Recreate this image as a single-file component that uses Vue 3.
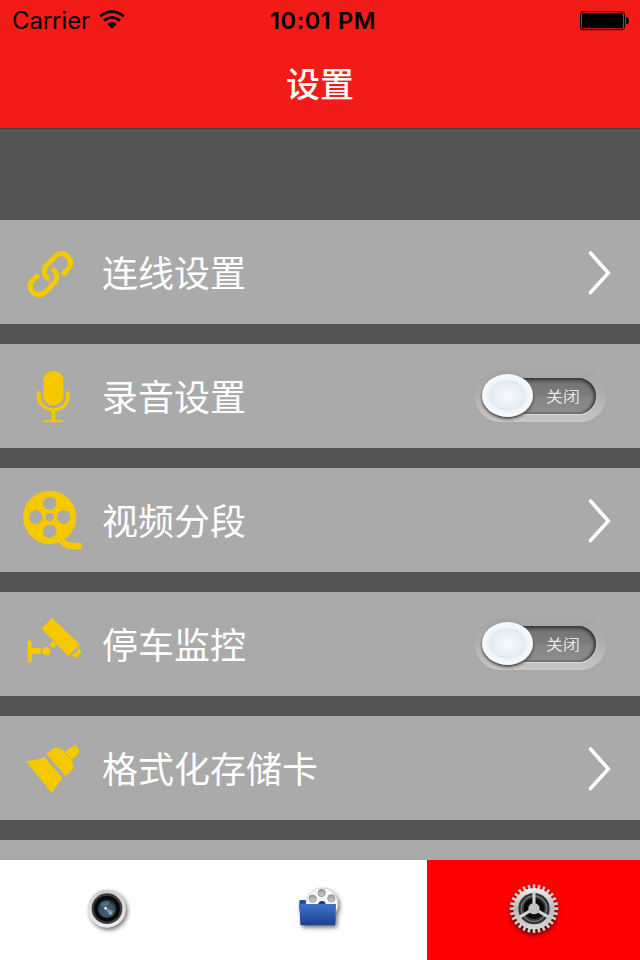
<script setup>
import { ref } from 'vue'

const rows = ref([
  { id: 'link', label: '连线设置', type: 'link' },
  { id: 'mic', label: '录音设置', type: 'switch' },
  { id: 'film', label: '视频分段', type: 'link' },
  { id: 'camera', label: '停车监控', type: 'switch' },
  { id: 'brush', label: '格式化存储卡', type: 'link' }
])

const teeth = Array.from({ length: 28 }, (_, i) => (i * 360) / 28)
</script>

<template>
  <div class="screen">
    <header class="header">
      <div class="status">
        <div class="carrier">
          <span>Carrier</span>
          <svg class="wifi" width="26" height="20" viewBox="0 0 26 20">
            <g fill="none" stroke="#000" stroke-width="2.7">
              <path d="M1.3 6.3 Q13 -3.1 24.7 6.3" />
              <path d="M5 10.6 Q13 4.1 21 10.6" />
            </g>
            <path d="M8.3 14 Q13 10.2 17.7 14 L13 18.8 Z" />
          </svg>
        </div>
        <span class="time">10:01 PM</span>
        <svg class="battery" width="50" height="20" viewBox="0 0 50 20">
          <rect x="0.5" y="0.7" width="44" height="18" rx="2.5" fill="none" stroke="#000" />
          <rect x="2" y="2.2" width="41" height="15" rx="1.2" />
          <path d="M46 6.2h1.2q1.8 1 1.8 3.5t-1.8 3.5h-1.2z" />
        </svg>
      </div>
      <h1>设置</h1>
    </header>

    <main class="list">
      <div v-for="row in rows" :key="row.id" class="row">
        <svg class="icon" width="100" height="104" viewBox="0 0 300 312">
          <g v-if="row.id === 'link'" transform="translate(30 45)" fill="none" stroke="#f5c800" stroke-width="15">
            <path d="M158 119 L175 101 Q190 83 175 66 Q157 47 138 62 L110 90 Q98 104 105 121 Q110 130 119 132" />
            <path d="M86 119 L67 137 Q53 154 68 172 Q87 187 105 172 L132 145 Q145 130 138 114 Q134 105 125 103" />
          </g>
          <g v-else-if="row.id === 'mic'" transform="translate(30 48)" fill="#f5c800">
            <rect x="100" y="32" width="60" height="104" rx="29" />
            <path d="M80 98 Q80 93 86 93 T92 98 V107 C92 157 168 157 168 107 V98 Q168 93 174 93 T180 98 V108 C180 134 160 151 136 154 V181 H158 V187 H101 V181 H124 V154 C100 151 80 134 80 108Z" />
          </g>
          <g v-else-if="row.id === 'film'" transform="translate(30 36)">
            <path d="M155 183 Q170 199 191 198 H215" fill="none" stroke="#f5c800" stroke-width="19" />
            <circle cx="119" cy="112" r="80" fill="#f5c800" />
            <g fill="#aaa">
              <circle cx="119" cy="70" r="20" />
              <circle cx="77" cy="111" r="20" />
              <circle cx="161" cy="111" r="20" />
              <circle cx="119" cy="154" r="20" />
              <circle cx="119" cy="111" r="12" />
            </g>
          </g>
          <g v-else-if="row.id === 'camera'" transform="translate(30 39)" fill="#f5c800">
            <path d="M53 107h12v22h27v18H65v24H53z" />
            <circle cx="109" cy="138" r="13" />
            <path d="M117 120l12-11 10 10-9 11z" />
            <path d="M126 38L207 116 V122 L178 151 H172 L94 71Z" />
            <path d="M205 129L213 137V144L200 158Q190 157 183 152Q200 145 205 129Z" />
          </g>
          <g v-else transform="translate(30 42)" fill="#f5c800">
            <path d="M48 93Q82 91 103 80L158 144L124 189Z" />
            <path d="M109 73L131 54Q138 50 148 56L159 61L188 96L191 115L167 138Z" />
            <path d="M163 65L196 45Q205 50 208 66L185 91Z" />
          </g>
        </svg>
        <span class="label">{{ row.label }}</span>
        <svg v-if="row.type === 'link'" class="arrow" width="26" height="46" viewBox="0 0 26 46">
          <path d="M4.5 4L22.3 24L4.5 43.5" fill="none" stroke="#fff" stroke-width="3.6" stroke-linecap="round" />
        </svg>
        <div v-else class="switch">
          <div class="track"><span>关闭</span></div>
          <div class="knob"></div>
        </div>
      </div>
      <div class="row"></div>
    </main>

    <nav class="tabs">
      <div class="tab">
        <svg class="lens" width="80" height="80" viewBox="0 0 240 240">
          <defs>
            <linearGradient id="lensRim" x1="0" y1="0" x2="0" y2="1">
              <stop offset="0" stop-color="#cecece" />
              <stop offset="1" stop-color="#ececec" />
            </linearGradient>
            <radialGradient id="lensGlass" cx=".5" cy=".6" r=".55">
              <stop offset="0" stop-color="#47677a" />
              <stop offset=".7" stop-color="#365262" />
              <stop offset="1" stop-color="#182a35" />
            </radialGradient>
          </defs>
          <circle class="shadow" cx="111" cy="116" r="57" fill="url(#lensRim)" />
          <circle cx="111" cy="116" r="46" fill="#3c3c3c" />
          <circle cx="111" cy="116" r="39" fill="#090909" />
          <circle cx="111" cy="116" r="28" fill="url(#lensGlass)" />
          <path d="M89 104Q99 89 120 95L107 114Z" fill="#7694a3" opacity=".45" />
          <path d="M108 115L130 123Q128 135 117 136Z" fill="#a7bfca" opacity=".55" />
          <circle cx="107" cy="115" r="4" fill="#e9f4fa" />
          <circle cx="122" cy="130" r="3" fill="#a9c4d0" />
        </svg>
      </div>
      <div class="tab">
        <svg width="80" height="80" viewBox="0 0 240 240">
          <defs>
            <linearGradient id="folder" x1="0" y1="0" x2="0" y2="1">
              <stop offset="0" stop-color="#3e75c8" />
              <stop offset="1" stop-color="#1b3e91" />
            </linearGradient>
            <linearGradient id="hole" x1="0" y1="0" x2="0" y2="1">
              <stop offset="0" stop-color="#999" />
              <stop offset="1" stop-color="#d0d0d0" />
            </linearGradient>
          </defs>
          <g class="shadow">
            <path d="M58 94Q58 90 63 90H75L79 95H108V120H58Z" fill="#214e9a" />
            <circle cx="126" cy="102" r="48" fill="#f8f8f8" stroke="#c9c9c9" stroke-width="2" />
            <g fill="url(#hole)" stroke="#858585" stroke-width="2">
              <circle cx="125" cy="69" r="11" />
              <circle cx="98" cy="86" r="11" />
              <circle cx="154" cy="85" r="11" />
            </g>
            <circle cx="126" cy="104" r="11" fill="#173b86" />
            <path d="M58 102H168L166 163Q166 166 162 166H65Q61 166 61 162Z" fill="url(#folder)" />
          </g>
        </svg>
      </div>
      <div class="tab active">
        <svg width="80" height="80" viewBox="0 0 240 240">
          <defs>
            <linearGradient id="metal" x1="0" y1="0" x2="0" y2="1">
              <stop offset="0" stop-color="#f0f0f0" />
              <stop offset=".5" stop-color="#b8b8b8" />
              <stop offset="1" stop-color="#d8d8d8" />
            </linearGradient>
          </defs>
          <g transform="translate(-1 0)">
            <g class="gear-shadow">
              <rect
                v-for="angle in teeth"
                :key="angle"
                x="117"
                y="43"
                width="8"
                height="16"
                rx="1"
                fill="#cecece"
                :transform="`rotate(${angle} 121 116)`"
              />
              <circle cx="121" cy="116" r="62" fill="url(#metal)" />
            </g>
            <circle cx="121" cy="116" r="47" fill="#343434" />
            <circle cx="121" cy="116" r="38" fill="none" stroke="#777" stroke-width="4" />
            <circle cx="121" cy="116" r="31" fill="#0b0b0b" />
            <path d="M121 116V64M121 116L78 141M121 116L164 141" stroke="#d5d5d5" stroke-width="9" />
            <circle cx="121" cy="116" r="17" fill="#c2c2c2" />
          </g>
        </svg>
      </div>
    </nav>
  </div>
</template>

<style>
body {
  margin: 0;
}
</style>

<style scoped>
.screen {
  width: 640px;
  height: 960px;
  display: flex;
  flex-direction: column;
  overflow: hidden;
  background: #555;
  font-family: "Inter", "Noto Sans CJK SC", sans-serif;
}

.header {
  flex: none;
  height: 129px;
  box-sizing: border-box;
  background: #f21b18;
  border-bottom: 1px solid #424242;
}

.status {
  height: 40px;
  display: grid;
  grid-template-columns: 1fr auto 1fr;
  align-items: center;
  padding: 1px 10px 0 12px;
  box-sizing: border-box;
  font-size: 24px;
}

.carrier {
  display: flex;
  align-items: center;
  gap: 9px;
  letter-spacing: -0.1px;
}

.wifi {
  margin-top: -1px;
}

.time {
  font-weight: 600;
  font-size: 23.5px;
  letter-spacing: 0.6px;
  margin-left: 4px;
}

.battery {
  justify-self: end;
}

h1 {
  margin: 0;
  height: 88px;
  line-height: 86px;
  text-align: center;
  color: #fff;
  font-family: "Noto Sans CJK SC", sans-serif;
  font-size: 34px;
  font-weight: 500;
}

.list {
  flex: 1;
  min-height: 0;
  overflow: hidden;
  display: flex;
  flex-direction: column;
  gap: 20px;
  padding-top: 91px;
}

.row {
  flex: none;
  height: 104px;
  display: flex;
  align-items: center;
  background: #aaa;
}

.icon {
  flex: none;
}

.label {
  flex: 1;
  margin-left: 2px;
  color: #fff;
  font-family: "Noto Sans CJK SC", sans-serif;
  font-size: 36px;
  font-weight: 400;
  line-height: 102px;
  height: 104px;
}

.arrow {
  margin-right: 28px;
}

.switch {
  position: relative;
  width: 131px;
  height: 51px;
  margin-right: 34px;
  border-radius: 26px;
  background: linear-gradient(#a6a6a6, #b0aeae 45%, #cbc6c6);
  box-shadow: 0 0 2px #a7a4a4;
}

.track {
  position: absolute;
  left: 12px;
  top: 7px;
  width: 109px;
  height: 36px;
  box-sizing: border-box;
  padding-left: 59px;
  border-radius: 18px;
  background: linear-gradient(#737373, #7c7c7c 50%, #848484 52%, #8c8c8c);
  box-shadow: inset 0 2px 4px #303030, inset -2px 0 3px #4b4b4b, 0 1px 1px #e2dfdf;
  color: #e4e4e4;
  font-family: "Noto Sans CJK SC", sans-serif;
  font-size: 17px;
  line-height: 35px;
}

.track span {
  display: inline-block;
  transform: scaleY(0.9);
}

.knob {
  position: absolute;
  left: 7px;
  top: 3px;
  width: 51px;
  height: 43px;
  border-radius: 50%;
  background: radial-gradient(ellipse 31px 25px at 50% 50%, #f8fbfd 0, #e2ebf2 58%, #eef5fa 64%, #fff 100%);
  box-shadow: 0 2px 3px #444, 0 0 1px #777;
}

.tabs {
  flex: none;
  height: 100px;
  display: grid;
  grid-template-columns: 213.5px 213.5px 213px;
}

.tab {
  display: flex;
  align-items: center;
  justify-content: center;
  background: #fff;
}

.tab svg {
  overflow: visible;
}

.tab .lens {
  margin-left: 6px;
}

.tab.active {
  background: #f00;
}

.shadow {
  filter: drop-shadow(5px 7px 7px rgba(0, 0, 0, 0.55));
}

.gear-shadow {
  filter: drop-shadow(0 9px 7px rgba(0, 0, 0, 0.7));
}
</style>
